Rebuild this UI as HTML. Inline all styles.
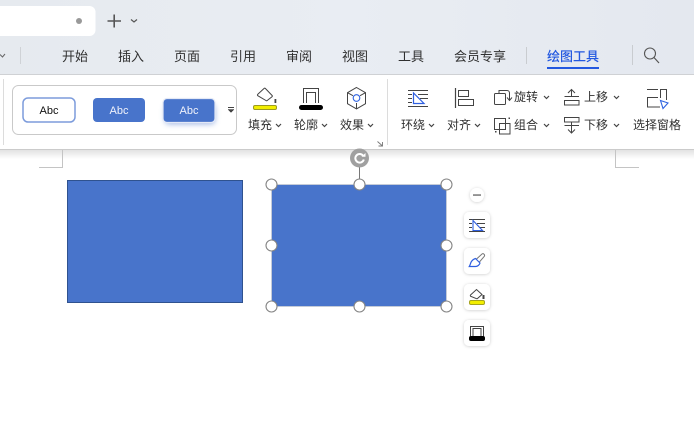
<!DOCTYPE html>
<html><head><meta charset="utf-8"><style>
html,body{margin:0;padding:0;width:694px;height:428px;overflow:hidden;background:#fff}
svg{display:block}
text{font-family:"Liberation Sans","Noto Sans CJK SC",sans-serif;font-size:12px;fill:#303030}
.t{font-size:13px}
</style></head><body>
<svg width="694" height="428" viewBox="0 0 694 428" xmlns="http://www.w3.org/2000/svg">
<defs>
<linearGradient id="bar" x1="0" x2="1" y1="0" y2="0"><stop offset="0" stop-color="#e6eaef"/><stop offset=".5" stop-color="#e9edf3"/><stop offset="1" stop-color="#e4e8ef"/></linearGradient>
<linearGradient id="sh" x1="0" x2="0" y1="0" y2="1"><stop offset="0" stop-color="#e2e2e2"/><stop offset="1" stop-color="#fff"/></linearGradient>
<filter id="blur" x="-30%" y="-50%" width="160%" height="220%"><feGaussianBlur stdDeviation="3"/></filter>
<filter id="ds" x="-40%" y="-40%" width="180%" height="180%"><feDropShadow dx="0" dy="0.500" stdDeviation="1.500" flood-color="#000" flood-opacity=".2"/></filter>
</defs>
<rect width="694" height="75" fill="url(#bar)"/>
<rect x="0" y="74" width="694" height="1" fill="#cfd1d4"/>
<rect x="0" y="75" width="694" height="74" fill="#fff"/>
<rect x="0" y="149" width="694" height="1" fill="#cbcbcb"/>
<rect x="0" y="150" width="694" height="9" fill="url(#sh)"/>

<!-- title tab -->
<rect x="-10" y="6" width="105.500" height="30" rx="6" fill="#fff"/>
<circle cx="79" cy="21" r="3" fill="#999"/>
<path d="M107.500 21H121M114.200 14.500V27.500" stroke="#555" stroke-width="1.600" fill="none"/>
<path d="M131 19.500l3 2.500 3-2.500" stroke="#555" stroke-width="1.200" fill="none"/>

<!-- menu -->
<path d="M0 54.500l2.500 2.500 2.500-3" stroke="#666" stroke-width="1" fill="none"/>
<rect x="20" y="47" width="1" height="17" fill="#cfd2d6"/>
<text class="t" x="62" y="61">开始</text>
<text class="t" x="118" y="61">插入</text>
<text class="t" x="174" y="61">页面</text>
<text class="t" x="230" y="61">引用</text>
<text class="t" x="286" y="61">审阅</text>
<text class="t" x="342" y="61">视图</text>
<text class="t" x="398" y="61">工具</text>
<text class="t" x="454" y="61">会员专享</text>
<rect x="526" y="47" width="1" height="17" fill="#c9ccd0"/>
<text class="t" x="547" y="61" style="fill:#2358e0;font-weight:500">绘图工具</text>
<rect x="547" y="67" width="52" height="2" fill="#2358e0"/>
<rect x="632" y="45" width="1" height="20" fill="#c9ccd0"/>
<circle cx="650" cy="53.500" r="5.500" stroke="#555" stroke-width="1.100" fill="none"/>
<path d="M654 57.500l5 5.500" stroke="#555" stroke-width="1.200" fill="none"/>

<!-- ribbon dividers -->
<rect x="3" y="79" width="1" height="66" fill="#dcdcdc"/>
<rect x="387" y="79" width="1" height="66" fill="#dcdcdc"/>

<!-- style gallery -->
<rect x="12.500" y="85.500" width="224" height="49" rx="6" fill="#fff" stroke="#c9c9c9"/>
<rect x="23" y="98" width="52" height="24" rx="5" fill="#fff" stroke="#7d9cdc" stroke-width="1.500"/>
<text x="49" y="114" text-anchor="middle" style="font-size:11px;fill:#111">Abc</text>
<rect x="93" y="98" width="52" height="24" rx="4" fill="#4874cb"/>
<text x="119" y="114" text-anchor="middle" style="font-size:11px;fill:#f0f2fa">Abc</text>
<rect x="165" y="104" width="50" height="20" rx="4" fill="#4874cb" opacity=".55" filter="url(#blur)"/>
<rect x="163" y="98.500" width="52" height="24" rx="4" fill="#4874cb" stroke="#e4e9f6" stroke-width="1.200"/>
<text x="189" y="114" text-anchor="middle" style="font-size:11px;fill:#f0f2fa">Abc</text>
<path d="M228 107.500h6" stroke="#444" stroke-width="1"/><path d="M228 109.500l3 3 3-3z" fill="#444" stroke="#444" stroke-width=".5"/>

<!-- fill icon -->
<path d="M257.800 94.300l6.200-5.800a1 1 0 0 1 1.400 0l6.600 6.900a1 1 0 0 1 0 1.400l-4.800 3.700a1 1 0 0 1-1.300 0l-8.100-4.800a1 1 0 0 1 0-1.400z" fill="none" stroke="#444"/>
<rect x="274.500" y="99" width="1.800" height="4" fill="#444"/>
<rect x="253.500" y="105.500" width="23" height="4" rx="1.500" fill="#f2ee00" stroke="#9c9a22"/>
<!-- outline icon -->
<path d="M303.500 103V88.500h15V103M306.500 103V92.500h9V103" fill="none" stroke="#444"/>
<rect x="299" y="105" width="24" height="5" rx="2.500" fill="#000"/>
<!-- effect icon -->
<path d="M356.500 87.500l9 5.200v11l-9 5.200-9-5.200v-11zM347.500 92.700l5.500 3M365.500 92.700l-5.500 3M356.500 103v5.500" fill="none" stroke="#444"/>
<circle cx="356.500" cy="98" r="3.300" fill="#fff" stroke="#2f63e0" stroke-width="1.100"/>

<text x="248" y="129">填充</text>
<text x="294" y="129">轮廓</text>
<text x="340" y="129">效果</text>
<g fill="none" stroke="#444" stroke-width="1.200">
<path d="M276 124l2.500 2.500 2.500-2.500M322 124l2.500 2.500 2.500-2.500M368 124l2.500 2.500 2.500-2.500M429 124l2.500 2.500 2.500-2.500M475 124l2.500 2.500 2.500-2.500M544 124l2.500 2.500 2.500-2.500M544 96l2.500 2.500 2.500-2.500M614 124l2.500 2.500 2.500-2.500M614 96l2.500 2.500 2.500-2.500"/>
</g>
<path d="M377.500 141.500l4.500 4M382.500 142v4h-4" fill="none" stroke="#777" stroke-width=".9"/>

<!-- wrap icon -->
<path d="M408 90.500h20M418 94.500h10M420 98.500h8M408 94.500h4M408 98.500h4M408 102.500h4M408 106.500h20" stroke="#444" stroke-width="1" fill="none"/>
<path d="M413.500 93v10.500h10.500z" fill="#fff" stroke="#2f5fe0" stroke-width="1.200"/>
<text x="401" y="129">环绕</text>
<!-- align icon -->
<path d="M455.500 88v20" stroke="#444" stroke-width="1.200"/>
<rect x="458.500" y="90.500" width="10" height="6" fill="none" stroke="#444"/>
<rect x="458.500" y="99.500" width="15" height="6" fill="none" stroke="#444"/>
<text x="447" y="129">对齐</text>

<!-- rotate -->
<rect x="494.500" y="93.500" width="11" height="11" rx="1" fill="none" stroke="#444"/>
<path d="M499 93V90.500h8a2.500 2.500 0 0 1 2.500 2.500v7M507 97.500l2.500 3 2.500-3" fill="none" stroke="#444"/>
<text x="514" y="101">旋转</text>
<!-- group -->
<rect x="494.500" y="118.500" width="11" height="11" fill="none" stroke="#444"/>
<rect x="499.500" y="123.500" width="10.500" height="10.500" fill="none" stroke="#444"/>
<rect x="495" y="131" width="1.500" height="1.500" fill="#444"/><rect x="508.500" y="117.500" width="1.500" height="1.500" fill="#444"/>
<text x="514" y="129">组合</text>

<!-- up -->
<path d="M568 93l3.500-3.500 3.500 3.500M571.500 89.500v7M564.500 96.500h14.500M564.500 100.500h14.500v4.500h-14.500z" fill="none" stroke="#444"/>
<text x="584" y="101">上移</text>
<!-- down -->
<path d="M564.500 117.500h14.500v4.500h-14.500zM564.500 125.500h14.500M571.500 122v10.500M568 129.500l3.500 3.500 3.500-3.500" fill="none" stroke="#444"/>
<text x="584" y="129">下移</text>
<!-- pane -->
<path d="M647 89.500h11M660.500 98V89.500h6V100M647 97.500h11M647.500 97.500v9.500h12.500" fill="none" stroke="#444"/>
<path d="M660.500 100.500l7.500 2.500-5 5.500z" fill="#fff" stroke="#2f63e0" stroke-width="1.100"/>
<text x="633" y="129">选择窗格</text>

<!-- page corners -->
<path d="M62.500 150v17.500H39M615.500 150v17.500H639" fill="none" stroke="#c4c4c4"/>

<!-- shapes -->
<rect x="67.500" y="180.500" width="175" height="122" fill="#4874cb" stroke="#2f528f"/>
<rect x="271.500" y="184.500" width="175" height="122" fill="#4874cb" stroke="#c4cbd8"/>
<path d="M359.500 166v18" stroke="#777"/>
<circle cx="359.500" cy="158" r="9.500" fill="#a0a0a0"/>
<path d="M363.300 156a4.300 4.300 0 1 0 .5 3.500" fill="none" stroke="#fff" stroke-width="2"/>
<path d="M361.500 156.800h4v-3.800z" fill="#fff"/>
<g fill="#fff" stroke="#858585" stroke-width="1.100">
<circle cx="271.500" cy="184.500" r="5.500"/><circle cx="359.500" cy="184.500" r="5.500"/><circle cx="446.500" cy="184.500" r="5.500"/>
<circle cx="271.500" cy="245.500" r="5.500"/><circle cx="446.500" cy="245.500" r="5.500"/>
<circle cx="271.500" cy="306.500" r="5.500"/><circle cx="359.500" cy="306.500" r="5.500"/><circle cx="446.500" cy="306.500" r="5.500"/>
</g>

<!-- side toolbar -->
<circle cx="477" cy="195" r="7" fill="#fff" filter="url(#ds)"/>
<rect x="473" y="194.300" width="8" height="1.500" fill="#777"/>
<g fill="#fff" filter="url(#ds)">
<rect x="464" y="212" width="26" height="26" rx="5"/>
<rect x="464" y="248" width="26" height="26" rx="5"/>
<rect x="464" y="284" width="26" height="26" rx="5"/>
<rect x="464" y="320" width="26" height="26" rx="5"/>
</g>
<path d="M469 219.500h16M477 223.500h8M479 227.500h6M469 223.500h3M469 227.500h3M469 231.500h16" stroke="#444" fill="none"/>
<path d="M473 220.500v10h9.500z" fill="#fff" stroke="#2f5fe0" stroke-width="1.100"/>
<path d="M476 259.500l6-5.500c1.300-1 3.300.8 2.300 2.300l-5.300 6.200z" fill="#fff" stroke="#777" stroke-width="1"/>
<path d="M475.500 258.500l4.500 4.500c-.5 2-2.500 3.500-4.500 3.500h-6.200c1-1.500 1-3 2-4.800 1-1.600 2.700-2.700 4.200-3.200z" fill="#fff" stroke="#2f5fe0" stroke-width="1.200"/>
<path d="M470.500 295l6-5.500 5.500 5-4.500 4a1 1 0 0 1-1.300 0l-5.700-2.300a1 1 0 0 1 0-1.200z" fill="none" stroke="#444"/>
<rect x="482.500" y="295" width="2" height="4" fill="#444"/>
<rect x="469.500" y="300.500" width="15" height="4" rx="1.500" fill="#f2ee00" stroke="#a5a31e"/>
<path d="M470.500 336.500v-10h13v10M473 336.500v-8h8v8" fill="none" stroke="#444"/>
<rect x="469" y="336" width="16" height="5" rx="2" fill="#000"/>
</svg>
</body></html>
